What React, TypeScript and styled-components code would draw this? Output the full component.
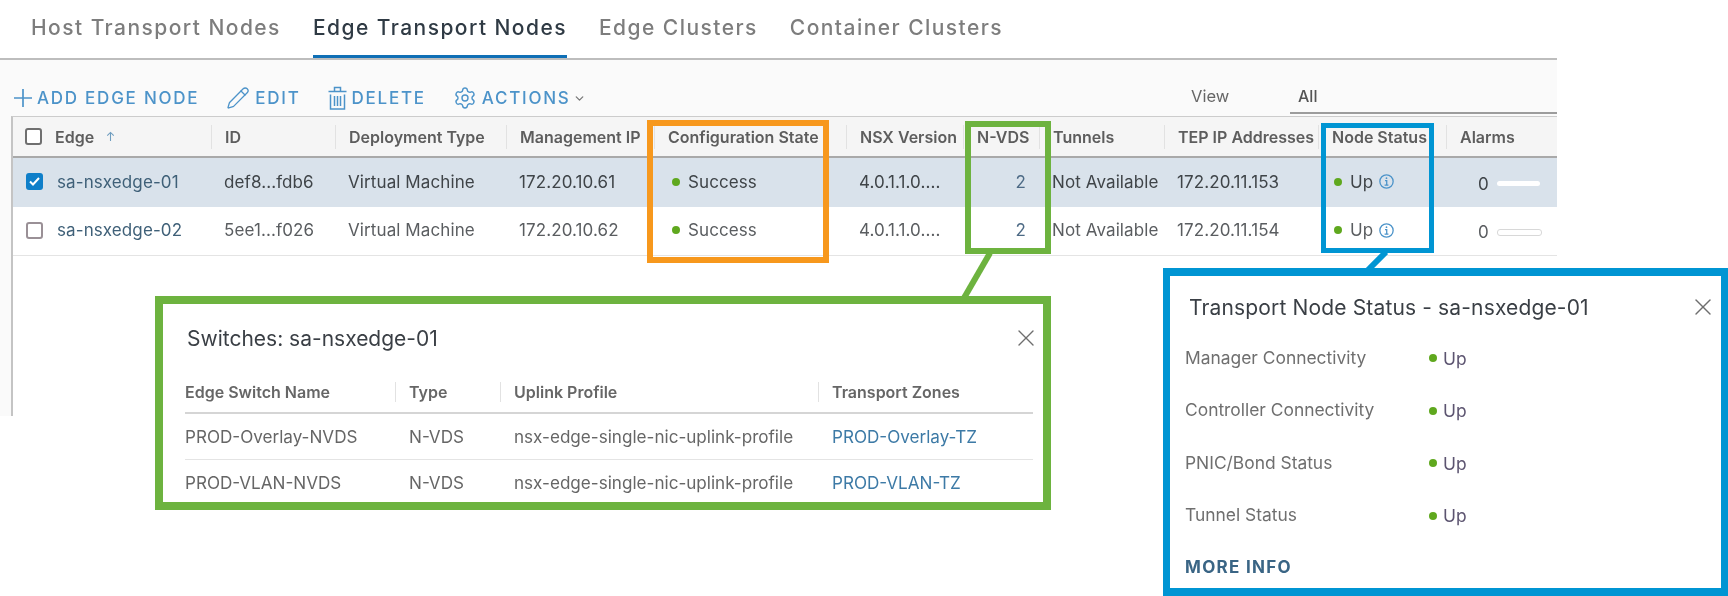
import React from "react";
import styled, { createGlobalStyle } from "styled-components";
import { ChevronDown, Pencil, Settings, X } from "lucide-react";

const GlobalStyle = createGlobalStyle`
  html, body {
    margin: 0;
    padding: 0;
    background: #fff;
  }
  body {
    font-family: Inter, "Noto Sans", "Liberation Sans", sans-serif;
  }
`;

const Page = styled.div`
  position: relative;
  width: 1728px;
  height: 596px;
  overflow: hidden;
  background: #fff;
  filter: blur(0.35px);
`;

const Panel = styled.div`
  width: 1557px;
  height: 416px;
  background: #fafafa;
`;

const Tabs = styled.nav`
  display: flex;
  gap: 32px;
  height: 58px;
  padding-left: 31px;
  border-bottom: 2px solid #bdbdbd;
  background: #fff;
`;

const Tab = styled.div<{ $active?: boolean }>`
  height: ${(p) => (p.$active ? "55px" : "58px")};
  line-height: 56px;
  font-size: 21px;
  font-weight: 500;
  letter-spacing: 1.45px;
  white-space: nowrap;
  color: ${(p) => (p.$active ? "#2f3a44" : "#7d7d7d")};
  border-bottom: ${(p) => (p.$active ? "3px solid #0f6fb5" : "none")};
`;

const Toolbar = styled.div`
  display: flex;
  align-items: center;
  height: 54px;
  padding: 22px 0 0 14px;
  box-sizing: border-box;
  color: #4c93c9;
`;

const Action = styled.div`
  display: flex;
  align-items: center;
  gap: 5px;
  margin-right: 27px;
  font-size: 17px;
  font-weight: 500;
  letter-spacing: 1.75px;
  white-space: nowrap;
`;

const Caret = styled(ChevronDown)`
  margin-left: -3px;
  color: #777;
`;

const ViewLabel = styled.div`
  margin-left: auto;
  width: 99px;
  padding-bottom: 4px;
  font-size: 16.5px;
  color: #666;
`;

const ViewFilter = styled.div`
  width: 267px;
  height: 34px;
  padding: 6px 0 0 8px;
  box-sizing: border-box;
  align-self: flex-end;
  border-bottom: 2px solid #9c9c9c;
  font-size: 16px;
  font-weight: 500;
  color: #555;
`;

const Table = styled.div`
  margin: 2px 0 0 11px;
  height: 299px;
  background: #fff;
  border-left: 2px solid #c4c4c4;
  border-top: 1px solid #ccc;
`;

const columns = "198px 124px 171px 148px 192px 117px 76px 125px 154px 128px 112px";

const HeaderRow = styled.div`
  display: grid;
  grid-template-columns: ${columns};
  align-items: center;
  height: 39px;
  background: #f5f5f5;
  border-bottom: 2px solid #a9a9a9;
`;

const HeaderCell = styled.div<{ $first?: boolean }>`
  display: flex;
  align-items: center;
  height: 24px;
  padding-left: ${(p) => (p.$first ? "12px" : "13px")};
  border-left: ${(p) => (p.$first ? "none" : "1px solid #e2e2e2")};
  font-size: 16px;
  font-weight: 600;
  white-space: nowrap;
  color: #5d5d5d;
`;

const HeaderName = styled.span`
  margin-left: 13px;
`;

const Row = styled.div<{ $selected?: boolean }>`
  display: grid;
  grid-template-columns: ${columns};
  align-items: center;
  height: 49px;
  padding-bottom: 2px;
  box-sizing: border-box;
  background: ${(p) => (p.$selected ? "#d9e2eb" : "#fff")};
  border-bottom: ${(p) => (p.$selected ? "none" : "1px solid #e4e4e4")};
`;

const Cell = styled.div<{ $selected?: boolean }>`
  display: flex;
  align-items: center;
  padding-left: 13px;
  font-size: 17px;
  letter-spacing: 0.1px;
  white-space: nowrap;
  color: ${(p) => (p.$selected ? "#3f4448" : "#5a5d60")};
`;

const EdgeCell = styled(Cell)`
  gap: 14px;
  color: #3f6078;
`;

const NodeStatusCell = styled(Cell)`
  padding-left: 16px;
`;

const ConfigStateCell = styled(Cell)`
  padding-left: 18px;
`;

const CountCell = styled(Cell)`
  justify-content: flex-end;
  padding: 0 13px 0 0;
  color: #4d6a85;
`;

const Box = styled.span<{ $checked?: boolean; $header?: boolean }>`
  display: inline-flex;
  align-items: center;
  justify-content: center;
  flex: none;
  width: 17px;
  height: 17px;
  box-sizing: border-box;
  border-radius: 3px;
  background: ${(p) => (p.$checked ? "#0f7fc9" : "#fff")};
  border: ${(p) =>
    p.$checked ? "none" : p.$header ? "2px solid #6f6f6f" : "2px solid #9a9096"};
`;

const SortArrow = styled.svg`
  margin-left: 12px;
`;

const Dot = styled.span`
  flex: none;
  width: 8px;
  height: 8px;
  margin-right: 8px;
  border-radius: 50%;
  background: #5fa81e;
`;

const StatusIcon = styled.svg`
  margin-left: 6px;
`;

const AlarmCount = styled.span`
  margin-left: 19px;
  padding-top: 4px;
`;

const AlarmBar = styled.span<{ $selected?: boolean }>`
  width: 43px;
  height: 5px;
  margin: 4px 0 0 8px;
  border-radius: 3px;
  background: #fff;
  border: ${(p) => (p.$selected ? "none" : "1px solid #d8d8d8")};
`;

const Highlight = styled.div`
  position: absolute;
  box-sizing: border-box;
  border-style: solid;
  border-width: 5px;
`;

const OrangeBox = styled(Highlight)`
  left: 647px;
  top: 120px;
  width: 182px;
  height: 143px;
  border-color: #f7981d;
  border-width: 6px;
`;

const GreenBox = styled(Highlight)`
  left: 965px;
  top: 121px;
  width: 86px;
  height: 133px;
  border-color: #6db33f;
  border-width: 6px;
`;

const BlueBox = styled(Highlight)`
  left: 1321px;
  top: 123px;
  width: 113px;
  height: 130px;
  border-color: #0095d3;
`;

const Connector = styled.svg`
  position: absolute;
  left: 0;
  top: 0;
  pointer-events: none;
`;

const Popup = styled.div`
  position: absolute;
  box-sizing: border-box;
  background: #fff;
  border-style: solid;
  border-width: 8px;
`;

const SwitchesPopup = styled(Popup)`
  left: 155px;
  top: 296px;
  width: 896px;
  height: 214px;
  padding: 20px 10px 0 22px;
  border-color: #6db33f;
`;

const StatusPopup = styled(Popup)`
  left: 1163px;
  top: 268px;
  width: 565px;
  height: 328px;
  padding: 17px 11px 0 15px;
  border-color: #0095d3;
  border-width: 8px 7px;
`;

const PopupHead = styled.div<{ $inset: number }>`
  display: flex;
  align-items: center;
  justify-content: space-between;
  height: 28px;
  padding-left: ${(p) => p.$inset}px;
  font-size: 21px;
  color: #3a3f45;
  white-space: nowrap;
`;

const StatusHead = styled(PopupHead)`
  letter-spacing: 0.15px;
`;

const Close = styled(X)`
  margin-right: -7px;
  color: #6e6e6e;
`;

const switchColumns = "210px 105px 318px 215px";

const SwitchHeader = styled.div`
  display: grid;
  grid-template-columns: ${switchColumns};
  align-items: center;
  height: 41px;
  margin-top: 19px;
  border-bottom: 2px solid #d5d5d5;
`;

const SwitchHeaderCell = styled.div<{ $first?: boolean }>`
  height: 20px;
  line-height: 20px;
  padding-left: ${(p) => (p.$first ? "0" : "13px")};
  border-left: ${(p) => (p.$first ? "none" : "1px solid #e2e2e2")};
  font-size: 16px;
  font-weight: 600;
  color: #666;
`;

const SwitchRow = styled.div<{ $last?: boolean }>`
  display: grid;
  grid-template-columns: ${switchColumns};
  align-items: center;
  height: 45px;
  border-bottom: ${(p) => (p.$last ? "none" : "1px solid #e4e4e4")};
`;

const SwitchCell = styled.div<{ $first?: boolean }>`
  padding-left: ${(p) => (p.$first ? "0" : "14px")};
  font-size: 17.1px;
  white-space: nowrap;
  color: #666;
`;

const ZoneLink = styled(SwitchCell)`
  color: #3d7aa6;
`;

const StatusList = styled.div`
  margin-top: 10px;
`;

const StatusRow = styled.div`
  display: grid;
  grid-template-columns: 244px 1fr;
  align-items: center;
  height: 52.5px;
  font-size: 17.4px;
  color: #6f6f6f;
`;

const StatusValue = styled.div`
  display: flex;
  align-items: center;
  padding-top: 2px;
  color: #5c5470;
`;

const StatusDot = styled(Dot)`
  margin-right: 6px;
`;

const MoreInfo = styled.div`
  margin-top: 16px;
  line-height: 20px;
  font-size: 17px;
  font-weight: 700;
  letter-spacing: 1.3px;
  color: #3a6585;
`;

const PlusIcon = () => (
  <svg width="18" height="18" viewBox="0 0 18 18" fill="none" stroke="currentColor" strokeWidth="1.7">
    <path d="M9 0v18M0 9h18" />
  </svg>
);

const TrashIcon = () => (
  <svg width="19" height="24" viewBox="0 0 19 24" fill="none" stroke="currentColor" strokeWidth="1.5">
    <path d="M0.5 5.5h18M6.5 5V1.5h6V5M2.5 8.5v14.5h14V8.5M6.5 10v10M9.5 10v10M12.5 10v10" />
  </svg>
);

const InfoIcon = () => (
  <StatusIcon width="15" height="15" viewBox="0 0 14 14" fill="none" stroke="#4b93c9" strokeWidth="1.2">
    <circle cx="7" cy="7" r="6.2" />
    <path d="M5.6 6.2h1.6v4M5.2 10.3h3.6" />
    <circle cx="7" cy="3.9" r="0.8" fill="#4b93c9" stroke="none" />
  </StatusIcon>
);

const headers = [
  "ID",
  "Deployment Type",
  "Management IP",
  "Configuration State",
  "NSX Version",
  "N-VDS",
  "Tunnels",
  "TEP IP Addresses",
  "Node Status",
  "Alarms",
];

const edges = [
  { name: "sa-nsxedge-01", id: "def8...fdb6", ip: "172.20.10.61", tep: "172.20.11.153", selected: true },
  { name: "sa-nsxedge-02", id: "5ee1...f026", ip: "172.20.10.62", tep: "172.20.11.154", selected: false },
];

const switches = [
  { name: "PROD-Overlay-NVDS", zone: "PROD-Overlay-TZ" },
  { name: "PROD-VLAN-NVDS", zone: "PROD-VLAN-TZ" },
];

const statuses = [
  "Manager Connectivity",
  "Controller Connectivity",
  "PNIC/Bond Status",
  "Tunnel Status",
];

export default function App() {
  return (
    <Page>
      <GlobalStyle />
      <Panel>
        <Tabs>
          <Tab>Host Transport Nodes</Tab>
          <Tab $active>Edge Transport Nodes</Tab>
          <Tab>Edge Clusters</Tab>
          <Tab>Container Clusters</Tab>
        </Tabs>
        <Toolbar>
          <Action>
            <PlusIcon />
            ADD EDGE NODE
          </Action>
          <Action>
            <Pencil size={24} strokeWidth={1.3} />
            EDIT
          </Action>
          <Action>
            <TrashIcon />
            DELETE
          </Action>
          <Action>
            <Settings size={24} strokeWidth={1.4} />
            ACTIONS
            <Caret size={13} strokeWidth={2.4} />
          </Action>
          <ViewLabel>View</ViewLabel>
          <ViewFilter>All</ViewFilter>
        </Toolbar>
        <Table>
          <HeaderRow>
            <HeaderCell $first>
              <Box $header />
              <HeaderName>Edge</HeaderName>
              <SortArrow width="9" height="11" viewBox="0 0 11 12" fill="none" stroke="#6f9dbf" strokeWidth="1.3">
                <path d="M5.5 11.5V1M1.5 5l4-4 4 4" />
              </SortArrow>
            </HeaderCell>
            {headers.map((h) => (
              <HeaderCell key={h}>{h}</HeaderCell>
            ))}
          </HeaderRow>
          {edges.map((e) => (
            <Row key={e.name} $selected={e.selected}>
              <EdgeCell>
                <Box $checked={e.selected}>
                  {e.selected && (
                    <svg width="11" height="9" viewBox="0 0 11 9" fill="none" stroke="#fff" strokeWidth="2">
                      <path d="M1 4.5l3 3 6-6.5" />
                    </svg>
                  )}
                </Box>
                {e.name}
              </EdgeCell>
              <Cell $selected={e.selected}>{e.id}</Cell>
              <Cell $selected={e.selected}>Virtual Machine</Cell>
              <Cell $selected={e.selected}>{e.ip}</Cell>
              <ConfigStateCell $selected={e.selected}>
                <Dot />
                Success
              </ConfigStateCell>
              <Cell $selected={e.selected}>4.0.1.1.0....</Cell>
              <CountCell>2</CountCell>
              <Cell $selected={e.selected}>Not Available</Cell>
              <Cell $selected={e.selected}>{e.tep}</Cell>
              <NodeStatusCell $selected={e.selected}>
                <Dot />
                Up
                <InfoIcon />
              </NodeStatusCell>
              <Cell $selected={e.selected}>
                <AlarmCount>0</AlarmCount>
                <AlarmBar $selected={e.selected} />
              </Cell>
            </Row>
          ))}
        </Table>
      </Panel>

      <OrangeBox />
      <GreenBox />
      <BlueBox />

      <Connector width="1728" height="596" viewBox="0 0 1728 596" fill="none" strokeWidth="6">
        <path d="M990 253L964 298" stroke="#6db33f" />
        <path d="M1386 252L1368 270" stroke="#0095d3" />
      </Connector>

      <SwitchesPopup>
        <PopupHead $inset={2}>
          Switches: sa-nsxedge-01
          <Close size={28} strokeWidth={1.2} />
        </PopupHead>
        <SwitchHeader>
          <SwitchHeaderCell $first>Edge Switch Name</SwitchHeaderCell>
          <SwitchHeaderCell>Type</SwitchHeaderCell>
          <SwitchHeaderCell>Uplink Profile</SwitchHeaderCell>
          <SwitchHeaderCell>Transport Zones</SwitchHeaderCell>
        </SwitchHeader>
        {switches.map((s, i) => (
          <SwitchRow key={s.name} $last={i === switches.length - 1}>
            <SwitchCell $first>{s.name}</SwitchCell>
            <SwitchCell>N-VDS</SwitchCell>
            <SwitchCell>nsx-edge-single-nic-uplink-profile</SwitchCell>
            <ZoneLink>{s.zone}</ZoneLink>
          </SwitchRow>
        ))}
      </SwitchesPopup>

      <StatusPopup>
        <StatusHead $inset={4}>
          Transport Node Status - sa-nsxedge-01
          <Close size={28} strokeWidth={1.2} />
        </StatusHead>
        <StatusList>
          {statuses.map((s) => (
            <StatusRow key={s}>
              {s}
              <StatusValue>
                <StatusDot />
                Up
              </StatusValue>
            </StatusRow>
          ))}
        </StatusList>
        <MoreInfo>MORE INFO</MoreInfo>
      </StatusPopup>
    </Page>
  );
}
